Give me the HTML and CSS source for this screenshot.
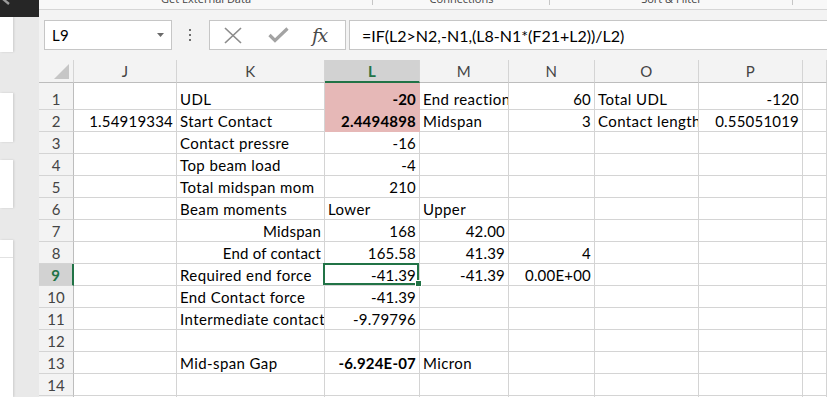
FILE: index.html
```html
<!DOCTYPE html>
<html>
<head>
  <title>Beam contact - Excel</title>
  <link rel="stylesheet" href="styles.css">
</head>
<body>
  <div class="app">
    <div class="side">
      <div class="side-top">
        <svg width="39" height="17" viewBox="0 0 39 17">
          <path d="M3 -1 L9 4" stroke="#9a9a9a" stroke-width="2.4" fill="none"/>
        </svg>
      </div>
      <div class="pane pane-1"></div>
      <div class="pane pane-2"></div>
      <div class="pane pane-3"></div>
      <div class="pane pane-4"><div class="pane-line"></div></div>
    </div>

    <div class="main">
      <div class="ribbon">
        <div class="group g1"><span>Get External Data</span></div>
        <div class="group g2"><span>Connections</span></div>
        <div class="group g3"><span>Sort &amp; Filter</span></div>
      </div>

      <div class="formula-bar">
        <div class="name-box">
          <span>L9</span>
          <svg width="7" height="4" viewBox="0 0 7 4"><path d="M0 0 H7 L3.5 4 Z" fill="#6a6a6a"/></svg>
        </div>
        <div class="grip">
          <svg width="3" height="13" viewBox="0 0 3 13">
            <rect x="0" y="0" width="2" height="2" fill="#6f6f6f"/>
            <rect x="0" y="5" width="2" height="2" fill="#6f6f6f"/>
            <rect x="0" y="10" width="2" height="2" fill="#6f6f6f"/>
          </svg>
        </div>
        <div class="func-box">
          <svg class="icon-x" width="18" height="17" viewBox="0 0 18 17">
            <path d="M1 1 L17 16 M17 1 L1 16" stroke="#8c8c8c" stroke-width="1.7" fill="none"/>
          </svg>
          <svg class="icon-check" width="21" height="16" viewBox="0 0 21 16">
            <path d="M1.5 8 L7 13.5 L19.5 1.5" stroke="#a3a3a3" stroke-width="3.2" fill="none"/>
          </svg>
          <span class="fx">fx</span>
        </div>
        <div class="formula-input">=IF(L2&gt;N2,-N1,(L8-N1*(F21+L2))/L2)</div>
      </div>

      <div class="sheet">
        <div class="row head">
          <div class="cell corner"><div class="tri"></div></div>
          <div class="cell">J</div>
          <div class="cell">K</div>
          <div class="cell active-col">L</div>
          <div class="cell">M</div>
          <div class="cell">N</div>
          <div class="cell">O</div>
          <div class="cell">P</div>
          <div class="cell"></div>
        </div>

        <div class="row r1">
          <div class="cell rh">1</div>
          <div class="cell"></div>
          <div class="cell">UDL</div>
          <div class="cell num bold pink">-20</div>
          <div class="cell">End reaction</div>
          <div class="cell num">60</div>
          <div class="cell">Total UDL</div>
          <div class="cell num">-120</div>
          <div class="cell"></div>
        </div>

        <div class="row">
          <div class="cell rh">2</div>
          <div class="cell num">1.54919334</div>
          <div class="cell">Start Contact</div>
          <div class="cell num bold pink">2.4494898</div>
          <div class="cell">Midspan</div>
          <div class="cell num">3</div>
          <div class="cell">Contact length</div>
          <div class="cell num">0.55051019</div>
          <div class="cell"></div>
        </div>

        <div class="row">
          <div class="cell rh">3</div>
          <div class="cell"></div>
          <div class="cell">Contact pressre</div>
          <div class="cell num">-16</div>
          <div class="cell"></div>
          <div class="cell"></div>
          <div class="cell"></div>
          <div class="cell"></div>
          <div class="cell"></div>
        </div>

        <div class="row">
          <div class="cell rh">4</div>
          <div class="cell"></div>
          <div class="cell">Top beam load</div>
          <div class="cell num">-4</div>
          <div class="cell"></div>
          <div class="cell"></div>
          <div class="cell"></div>
          <div class="cell"></div>
          <div class="cell"></div>
        </div>

        <div class="row">
          <div class="cell rh">5</div>
          <div class="cell"></div>
          <div class="cell">Total midspan mom</div>
          <div class="cell num">210</div>
          <div class="cell"></div>
          <div class="cell"></div>
          <div class="cell"></div>
          <div class="cell"></div>
          <div class="cell"></div>
        </div>

        <div class="row">
          <div class="cell rh">6</div>
          <div class="cell"></div>
          <div class="cell">Beam moments</div>
          <div class="cell">Lower</div>
          <div class="cell">Upper</div>
          <div class="cell"></div>
          <div class="cell"></div>
          <div class="cell"></div>
          <div class="cell"></div>
        </div>

        <div class="row">
          <div class="cell rh">7</div>
          <div class="cell"></div>
          <div class="cell num">Midspan</div>
          <div class="cell num">168</div>
          <div class="cell num">42.00</div>
          <div class="cell"></div>
          <div class="cell"></div>
          <div class="cell"></div>
          <div class="cell"></div>
        </div>

        <div class="row">
          <div class="cell rh">8</div>
          <div class="cell"></div>
          <div class="cell num">End of contact</div>
          <div class="cell num">165.58</div>
          <div class="cell num">41.39</div>
          <div class="cell num">4</div>
          <div class="cell"></div>
          <div class="cell"></div>
          <div class="cell"></div>
        </div>

        <div class="row">
          <div class="cell rh active-row">9</div>
          <div class="cell"></div>
          <div class="cell">Required end force</div>
          <div class="cell num selected">-41.39<span class="handle"></span></div>
          <div class="cell num">-41.39</div>
          <div class="cell num">0.00E+00</div>
          <div class="cell"></div>
          <div class="cell"></div>
          <div class="cell"></div>
        </div>

        <div class="row">
          <div class="cell rh">10</div>
          <div class="cell"></div>
          <div class="cell">End Contact force</div>
          <div class="cell num">-41.39</div>
          <div class="cell"></div>
          <div class="cell"></div>
          <div class="cell"></div>
          <div class="cell"></div>
          <div class="cell"></div>
        </div>

        <div class="row">
          <div class="cell rh">11</div>
          <div class="cell"></div>
          <div class="cell">Intermediate contact</div>
          <div class="cell num">-9.79796</div>
          <div class="cell"></div>
          <div class="cell"></div>
          <div class="cell"></div>
          <div class="cell"></div>
          <div class="cell"></div>
        </div>

        <div class="row">
          <div class="cell rh">12</div>
          <div class="cell"></div>
          <div class="cell"></div>
          <div class="cell"></div>
          <div class="cell"></div>
          <div class="cell"></div>
          <div class="cell"></div>
          <div class="cell"></div>
          <div class="cell"></div>
        </div>

        <div class="row">
          <div class="cell rh">13</div>
          <div class="cell"></div>
          <div class="cell">Mid-span Gap</div>
          <div class="cell num bold">-6.924E-07</div>
          <div class="cell">Micron</div>
          <div class="cell"></div>
          <div class="cell"></div>
          <div class="cell"></div>
          <div class="cell"></div>
        </div>

        <div class="row">
          <div class="cell rh">14</div>
          <div class="cell"></div>
          <div class="cell"></div>
          <div class="cell"></div>
          <div class="cell"></div>
          <div class="cell"></div>
          <div class="cell"></div>
          <div class="cell"></div>
          <div class="cell"></div>
        </div>

        <div class="row">
          <div class="cell rh">15</div>
          <div class="cell"></div>
          <div class="cell"></div>
          <div class="cell"></div>
          <div class="cell"></div>
          <div class="cell"></div>
          <div class="cell"></div>
          <div class="cell"></div>
          <div class="cell"></div>
        </div>
      </div>
    </div>
  </div>
</body>
</html>
```

FILE: styles.css
```css
* {
  box-sizing: border-box;
}

body {
  margin: 0;
  font-family: Lato, "Noto Sans", sans-serif;
  background-color: #f3f3f3;
  overflow: hidden;
}

.app {
  display: flex;
  width: 827px;
  height: 397px;
}

/* left task pane strip */
.side {
  width: 39px;
  flex: none;
  display: flex;
  flex-direction: column;
  background-color: #e9e9e9;
}

.side-top {
  height: 17px;
  background-color: #262626;
}

.side-top svg {
  display: block;
}

.pane {
  width: 13px;
  background-color: #fff;
  box-shadow: 1px 0 2px rgba(0, 0, 0, 0.12);
}

.pane-1 {
  height: 35px;
}

.pane-2 {
  margin-top: 41px;
  height: 49px;
}

.pane-3 {
  margin-top: 18px;
  height: 48px;
}

.pane-4 {
  margin-top: 32px;
  flex: 1;
}

.pane-line {
  height: 18px;
  border-bottom: 1px solid #e2e2e2;
}

.main {
  flex: 1;
  min-width: 0;
  display: flex;
  flex-direction: column;
}

/* ribbon group labels, cut off at the top */
.ribbon {
  height: 10px;
  display: flex;
  background-color: #f8f8f8;
  border-bottom: 1px solid #d6d6d6;
  overflow: hidden;
}

.group {
  position: relative;
  text-align: center;
  font-family: "Open Sans", sans-serif;
  font-size: 11px;
  line-height: 12px;
  color: #444;
  white-space: nowrap;
}

.group span {
  display: block;
  margin-top: -7px;
}

.group::after {
  content: "";
  position: absolute;
  top: 0;
  right: 0;
  width: 1px;
  height: 5px;
  background-color: #c6c6c6;
}

.g1 {
  width: 334px;
}

.g2 {
  width: 177px;
}

.g3 {
  width: 243px;
}

/* formula bar */
.formula-bar {
  height: 50px;
  display: flex;
  align-items: flex-start;
  padding: 10px 0 0 5px;
}

.name-box {
  width: 128px;
  height: 30px;
  display: flex;
  align-items: center;
  justify-content: space-between;
  padding: 0 7px;
  background-color: #fff;
  border: 1px solid #c6c6c6;
  font-size: 15px;
  letter-spacing: 0.3px;
  color: #000;
}

.grip {
  width: 37px;
  height: 30px;
  display: flex;
  align-items: center;
  justify-content: center;
  padding-right: 1px;
}

.grip svg {
  margin-top: 1px;
}

.func-box {
  width: 137px;
  height: 30px;
  display: flex;
  align-items: center;
  background-color: #fff;
  border: 1px solid #c6c6c6;
}

.icon-x {
  margin-left: 14px;
}

.icon-check {
  margin-left: 26px;
}

.fx {
  margin-left: 23px;
  margin-top: -1px;
  font-family: "DejaVu Serif", serif;
  font-style: italic;
  font-size: 19px;
  color: #4a4a4a;
  letter-spacing: -1.5px;
}

.formula-input {
  flex: 1;
  height: 30px;
  margin-left: 3px;
  padding-left: 12px;
  display: flex;
  align-items: center;
  background-color: #fff;
  border: 1px solid #c6c6c6;
  border-right: none;
  font-size: 16px;
  color: #000;
  white-space: nowrap;
}

/* grid */
.sheet {
  flex: 1;
  overflow: hidden;
  background-color: #fff;
}

.row {
  display: grid;
  grid-template-columns: 35px 103px 148px 95px 89px 86px 104px 104px 1fr;
  height: 22px;
}

.row.r1 {
  height: 27px;
}

.cell {
  display: flex;
  align-items: flex-end;
  padding: 0 3px 1px;
  border-right: 1px solid #d4d4d4;
  border-bottom: 1px solid #d4d4d4;
  font-size: 15px;
  line-height: 18px;
  letter-spacing: 0.4px;
  color: #000;
  white-space: nowrap;
  overflow: hidden;
}

.num {
  justify-content: flex-end;
  letter-spacing: 0.2px;
}

.bold {
  font-weight: bold;
}

.pink {
  background-color: #e6b8b7;
  border-color: #e6b8b7;
}

.head {
  height: 23px;
  background-color: #f3f3f3;
}

.head .cell {
  align-items: center;
  justify-content: center;
  padding: 0;
  color: #444;
  border-bottom-color: #bdbdbd;
}

.head .active-col {
  background-color: #d2d2d2;
  color: #217346;
  font-weight: bold;
  border-bottom: 2px solid #217346;
}

.corner {
  align-items: flex-end !important;
  justify-content: flex-end !important;
  padding: 0 4px 3px 0 !important;
}

.tri {
  width: 0;
  height: 0;
  border-left: 15px solid transparent;
  border-bottom: 15px solid #c6c6c6;
}

.rh {
  justify-content: center;
  padding: 0 0 1px;
  background-color: #f3f3f3;
  color: #444;
  letter-spacing: 0;
  border-right-color: #bdbdbd;
}

.rh.active-row {
  background-color: #d2d2d2;
  color: #217346;
  font-weight: bold;
  border-right: 2px solid #217346;
}

.selected {
  position: relative;
  overflow: visible;
}

.selected::before {
  content: "";
  position: absolute;
  top: -1px;
  left: -2px;
  right: 0;
  bottom: 0;
  border: 2px solid #217346;
}

.handle {
  position: absolute;
  right: -3px;
  bottom: -2px;
  width: 7px;
  height: 7px;
  background-color: #217346;
  border: 1px solid #fff;
  z-index: 2;
}
```
